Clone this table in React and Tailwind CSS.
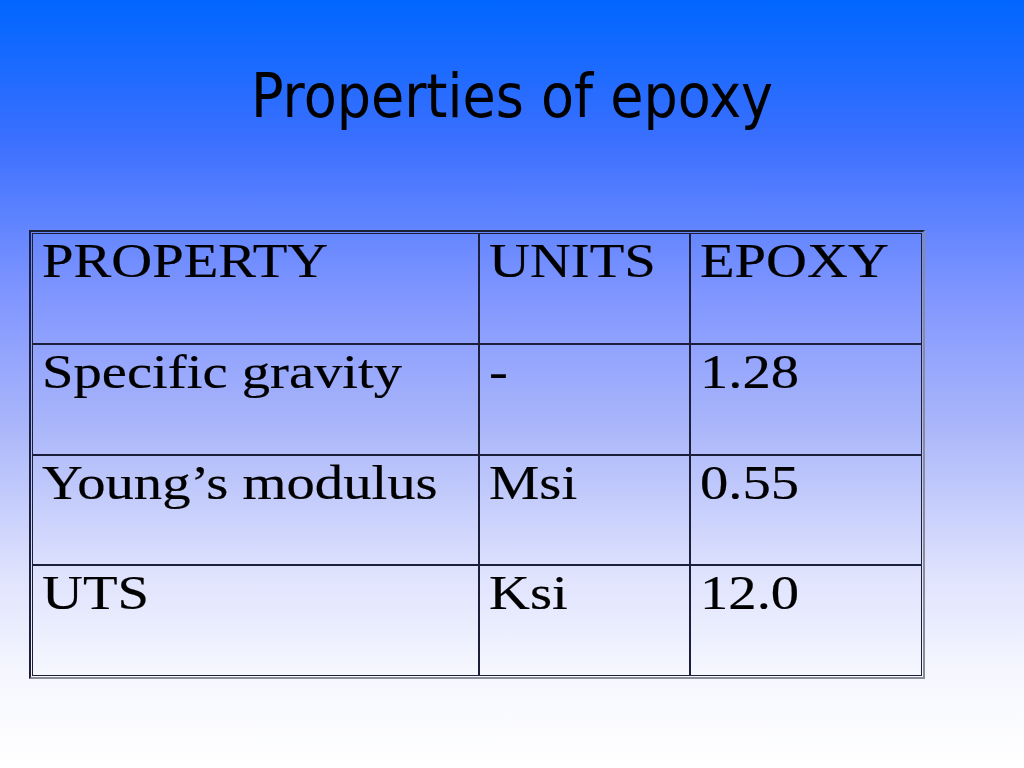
const rows = [
  ['PROPERTY', 'UNITS', 'EPOXY'],
  ['Specific gravity', '-', '1.28'],
  ['Young\u2019s modulus', 'Msi', '0.55'],
  ['UTS', 'Ksi', '12.0'],
];

const colWidths = ['w-[447px]', 'w-[211px]', 'flex-1'];

function Cell({ text, col }) {
  const lastCol = col === 2;
  return (
    <div
      className={`${colWidths[col]} h-full pl-[9px] pt-[3px] border-[#1c1f3a] ${lastCol ? '' : 'border-r-2'}`}
    >
      <span
        className="inline-block origin-left scale-x-[1.18] text-[48px] leading-none text-black whitespace-nowrap [-webkit-text-stroke:0.2px_black]"
        style={{ fontFamily: '"Liberation Serif", "Times New Roman", serif' }}
      >
        {text}
      </span>
    </div>
  );
}

export default function App() {
  return (
    <div className="w-[1024px] h-[768px] overflow-hidden bg-[linear-gradient(to_bottom,#0066ff_0%,#3a6fff_18%,#7f95ff_38%,#a9b5fa_55%,#dfe3fd_75%,#f6f7fe_88%,#ffffff_100%)]">
      <div className="pt-[66px] flex justify-center">
        <h1
          className="inline-block scale-x-[0.9] text-[60px] leading-none font-normal text-black whitespace-nowrap"
          style={{ fontFamily: '"DejaVu Sans", Verdana, sans-serif' }}
        >
          Properties of epoxy
        </h1>
      </div>

      <div className="mt-[104px] ml-[29px] w-[896px] h-[449px] border-2 border-t-[#1c1f3a] border-l-[#1c1f3a] border-b-[#8c8c98] border-r-[#8c8c98] p-px">
        <div className="w-full h-full border border-[#1c1f3a] flex flex-col">
          {rows.map((row, r) => (
            <div
              key={r}
              className={`flex flex-1 border-[#1c1f3a] ${r < rows.length - 1 ? 'border-b-2' : ''}`}
            >
              {row.map((text, c) => (
                <Cell key={c} text={text} col={c} />
              ))}
            </div>
          ))}
        </div>
      </div>
    </div>
  );
}
